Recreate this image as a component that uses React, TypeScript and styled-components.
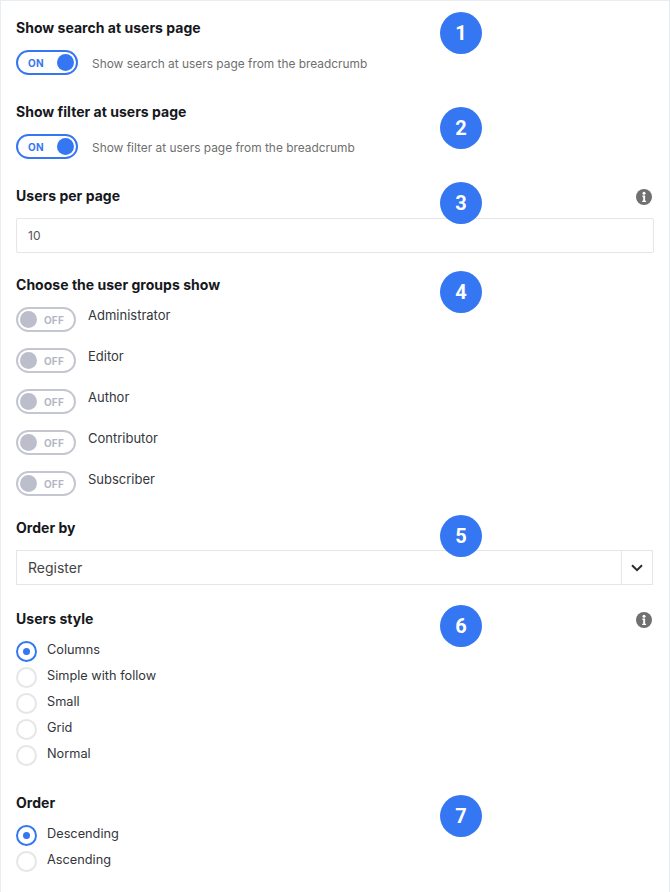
import React from "react";
import styled, { createGlobalStyle } from "styled-components";

const Global = createGlobalStyle`
  html, body { margin: 0; padding: 0; background: #fff; }
  body { font-family: Inter, "Liberation Sans", sans-serif; color: #16181d; }
`;

const Page = styled.div`
  width: 670px;
  height: 892px;
  box-sizing: border-box;
  border-top: 1px solid #e8edf3;
  border-left: 1px solid #e8edf3;
  border-right: 1px solid #e8edf3;
  padding: 18px 15px 0 15px;
  overflow: hidden;
`;

const Section = styled.section<{ $mb: number }>`
  position: relative;
  margin-bottom: ${(p) => p.$mb}px;
`;

const Title = styled.h3`
  margin: 0;
  font-size: 14px;
  line-height: 18px;
  font-weight: 700;
  letter-spacing: 0.02px;
  color: #16181d;
`;

const Badge = styled.div<{ $top: number }>`
  position: absolute;
  left: 424px;
  top: ${(p) => p.$top}px;
  width: 42px;
  height: 42px;
  border-radius: 50%;
  background: #3576f3;
  color: #fff;
  font-family: Roboto, sans-serif;
  font-weight: 700;
  font-size: 20px;
  display: flex;
  align-items: center;
  justify-content: center;
`;

const InfoIcon = styled.svg`
  position: absolute;
  right: 2px;
  top: 2px;
  width: 16px;
  height: 16px;
`;

const SwitchRow = styled.div`
  display: flex;
  align-items: center;
  margin-top: 13px;
`;

const Track = styled.div<{ $on: boolean }>`
  box-sizing: border-box;
  width: ${(p) => (p.$on ? 62 : 60)}px;
  height: 25px;
  border-radius: 13px;
  border: 2px solid ${(p) => (p.$on ? "#3576f3" : "#c4c6d0")};
  background: #fff;
  display: flex;
  flex-direction: ${(p) => (p.$on ? "row-reverse" : "row")};
  align-items: center;
  justify-content: space-between;
  padding: ${(p) => (p.$on ? "0 2px 0 10px" : "0 10px 0 2px")};
  flex-shrink: 0;
`;

const Knob = styled.span<{ $on: boolean }>`
  width: 17px;
  height: 17px;
  border-radius: 50%;
  background: ${(p) => (p.$on ? "#3576f3" : "#bcbfcb")};
`;

const TrackLabel = styled.span<{ $on: boolean }>`
  font-size: 10px;
  font-weight: 700;
  letter-spacing: 0.2px;
  color: ${(p) => (p.$on ? "#3576f3" : "#b4b7c3")};
`;

const Hint = styled.span`
  margin-left: 14px;
  margin-top: 1px;
  font-size: 11.9px;
  color: #6f6f6f;
`;

const TextField = styled.div`
  box-sizing: border-box;
  margin-top: 13px;
  width: 638px;
  height: 35px;
  border: 1px solid #e6e6e6;
  border-radius: 2px;
  display: flex;
  align-items: center;
  padding: 0 11px;
  font-size: 12px;
  color: #555;
`;

const Groups = styled.div`
  display: flex;
  flex-direction: column;
  gap: 16px;
  margin-top: 13px;
`;

const GroupRow = styled.div`
  display: flex;
  align-items: flex-start;
`;

const GroupLabel = styled.span`
  margin-left: 12px;
  font-size: 13px;
  line-height: 16px;
  color: #33363c;
`;

const Select = styled.div`
  box-sizing: border-box;
  margin-top: 13px;
  width: 637px;
  height: 35px;
  border: 1px solid #e6e6e6;
  display: flex;
  align-items: center;
  font-size: 14px;
  color: #444;
`;

const SelectValue = styled.span`
  flex: 1;
  padding-left: 11px;
`;

const SelectArrow = styled.span`
  width: 30px;
  height: 100%;
  border-left: 1px solid #e6e6e6;
  display: flex;
  align-items: center;
  justify-content: center;
`;

const Radios = styled.div`
  display: flex;
  flex-direction: column;
  gap: 4px;
  margin-top: 12px;
`;

const RadioRow = styled.div`
  display: flex;
  align-items: center;
  height: 22px;
`;

const RadioDot = styled.span<{ $on: boolean }>`
  box-sizing: border-box;
  width: 21px;
  height: 21px;
  border-radius: 50%;
  border: 2px solid ${(p) => (p.$on ? "#3576f3" : "#e6e6e6")};
  background: #fff;
  display: flex;
  align-items: center;
  justify-content: center;
  &::after {
    content: "";
    display: ${(p) => (p.$on ? "block" : "none")};
    width: 7px;
    height: 7px;
    border-radius: 50%;
    background: #3576f3;
  }
`;

const RadioLabel = styled.span`
  margin-left: 10px;
  margin-top: -3px;
  font-size: 12.75px;
  color: #33363c;
`;

const Info = () => (
  <InfoIcon viewBox="0 0 16 16">
    <circle cx="8" cy="8" r="8" fill="#707070" />
    <circle cx="8" cy="4.2" r="1.5" fill="#fff" />
    <path d="M6.4 6.6h2.7v5.2h1v1.3H6.2v-1.3h1v-3.9h-.8z" fill="#fff" />
  </InfoIcon>
);

const Switch = ({ on }: { on: boolean }) => (
  <Track $on={on}>
    <Knob $on={on} />
    <TrackLabel $on={on}>{on ? "ON" : "OFF"}</TrackLabel>
  </Track>
);

const groups = ["Administrator", "Editor", "Author", "Contributor", "Subscriber"];
const styles = ["Columns", "Simple with follow", "Small", "Grid", "Normal"];
const orders = ["Descending", "Ascending"];

export default function App() {
  return (
    <Page>
      <Global />
      <Section $mb={28}>
        <Title>Show search at users page</Title>
        <Badge $top={-7}>1</Badge>
        <SwitchRow>
          <Switch on />
          <Hint>Show search at users page from the breadcrumb</Hint>
        </SwitchRow>
      </Section>
      <Section $mb={28}>
        <Title>Show filter at users page</Title>
        <Badge $top={4}>2</Badge>
        <SwitchRow>
          <Switch on />
          <Hint>Show filter at users page from the breadcrumb</Hint>
        </SwitchRow>
      </Section>
      <Section $mb={23}>
        <Title>Users per page</Title>
        <Badge $top={-5}>3</Badge>
        <Info />
        <TextField>10</TextField>
      </Section>
      <Section $mb={23}>
        <Title>Choose the user groups show</Title>
        <Badge $top={-5}>4</Badge>
        <Groups>
          {groups.map((g) => (
            <GroupRow key={g}>
              <Switch on={false} />
              <GroupLabel>{g}</GroupLabel>
            </GroupRow>
          ))}
        </Groups>
      </Section>
      <Section $mb={25}>
        <Title>Order by</Title>
        <Badge $top={-4}>5</Badge>
        <Select>
          <SelectValue>Register</SelectValue>
          <SelectArrow>
            <svg width="12" height="8" viewBox="0 0 12 8">
              <path d="M1 1.2l5 5 5-5" fill="none" stroke="#2b2b2b" strokeWidth="2" />
            </svg>
          </SelectArrow>
        </Select>
      </Section>
      <Section $mb={28}>
        <Title>Users style</Title>
        <Badge $top={-5}>6</Badge>
        <Info />
        <Radios>
          {styles.map((s, i) => (
            <RadioRow key={s}>
              <RadioDot $on={i === 0} />
              <RadioLabel>{s}</RadioLabel>
            </RadioRow>
          ))}
        </Radios>
      </Section>
      <Section $mb={0}>
        <Title>Order</Title>
        <Badge $top={1}>7</Badge>
        <Radios>
          {orders.map((s, i) => (
            <RadioRow key={s}>
              <RadioDot $on={i === 0} />
              <RadioLabel>{s}</RadioLabel>
            </RadioRow>
          ))}
        </Radios>
      </Section>
    </Page>
  );
}
